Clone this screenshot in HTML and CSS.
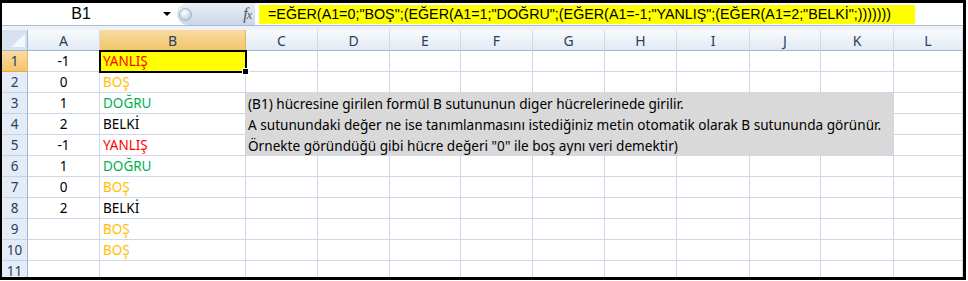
FILE: index.html
```html
<!DOCTYPE html>
<html lang="tr">
<head>
    <meta charset="UTF-8">
    <title>EĞER formülü</title>
    <link rel="stylesheet" href="styles.css">
</head>
<body>
    <div class="window">
        <!-- Formula bar -->
        <div class="formula-bar">
            <div class="name-box">
                <span class="name">B1</span>
                <span class="drop"></span>
            </div>
            <div class="fx-pill">
                <span class="knob"></span>
                <span class="fx">f<span class="fx-x">x</span></span>
            </div>
            <div class="formula">=EĞER(A1=0;"BOŞ";(EĞER(A1=1;"DOĞRU";(EĞER(A1=-1;"YANLIŞ";(EĞER(A1=2;"BELKİ";)))))))</div>
        </div>
        <div class="bar-gap"></div>

        <!-- Sheet -->
        <div class="sheet">
            <div class="corner">
                <svg viewBox="0 0 26 20" width="26" height="20">
                    <polygon points="23,4 23,17 9,17" class="corner-tri"></polygon>
                </svg>
            </div>
            <div class="col-head">A</div>
            <div class="col-head active">B</div>
            <div class="col-head">C</div>
            <div class="col-head">D</div>
            <div class="col-head">E</div>
            <div class="col-head">F</div>
            <div class="col-head">G</div>
            <div class="col-head">H</div>
            <div class="col-head">I</div>
            <div class="col-head">J</div>
            <div class="col-head">K</div>
            <div class="col-head">L</div>

            <!-- row 1 -->
            <div class="row-head active">1</div>
            <div class="cell num">-1</div>
            <div class="cell selected red">YANLIŞ<span class="handle"></span></div>
            <div class="cell"></div><div class="cell"></div><div class="cell"></div><div class="cell"></div><div class="cell"></div>
            <div class="cell"></div><div class="cell"></div><div class="cell"></div><div class="cell"></div><div class="cell"></div>

            <!-- row 2 -->
            <div class="row-head">2</div>
            <div class="cell num">0</div>
            <div class="cell orange">BOŞ</div>
            <div class="cell"></div><div class="cell"></div><div class="cell"></div><div class="cell"></div><div class="cell"></div>
            <div class="cell"></div><div class="cell"></div><div class="cell"></div><div class="cell"></div><div class="cell"></div>

            <!-- row 3 -->
            <div class="row-head">3</div>
            <div class="cell num">1</div>
            <div class="cell green">DOĞRU</div>
            <div class="note">
                <p>(B1) hücresine girilen formül B sutununun diger hücrelerinede girilir.</p>
                <p>A sutunundaki değer ne ise tanımlanmasını istediğiniz metin otomatik olarak B sutununda görünür.</p>
                <p>Örnekte göründüğü gibi hücre değeri "0" ile boş aynı veri demektir)</p>
            </div>
            <div class="cell"></div>

            <!-- row 4 -->
            <div class="row-head">4</div>
            <div class="cell num">2</div>
            <div class="cell">BELKİ</div>
            <div class="cell"></div>

            <!-- row 5 -->
            <div class="row-head">5</div>
            <div class="cell num">-1</div>
            <div class="cell red">YANLIŞ</div>
            <div class="cell"></div>

            <!-- row 6 -->
            <div class="row-head">6</div>
            <div class="cell num">1</div>
            <div class="cell green">DOĞRU</div>
            <div class="cell"></div><div class="cell"></div><div class="cell"></div><div class="cell"></div><div class="cell"></div>
            <div class="cell"></div><div class="cell"></div><div class="cell"></div><div class="cell"></div><div class="cell"></div>

            <!-- row 7 -->
            <div class="row-head">7</div>
            <div class="cell num">0</div>
            <div class="cell orange">BOŞ</div>
            <div class="cell"></div><div class="cell"></div><div class="cell"></div><div class="cell"></div><div class="cell"></div>
            <div class="cell"></div><div class="cell"></div><div class="cell"></div><div class="cell"></div><div class="cell"></div>

            <!-- row 8 -->
            <div class="row-head">8</div>
            <div class="cell num">2</div>
            <div class="cell">BELKİ</div>
            <div class="cell"></div><div class="cell"></div><div class="cell"></div><div class="cell"></div><div class="cell"></div>
            <div class="cell"></div><div class="cell"></div><div class="cell"></div><div class="cell"></div><div class="cell"></div>

            <!-- row 9 -->
            <div class="row-head">9</div>
            <div class="cell num"></div>
            <div class="cell orange">BOŞ</div>
            <div class="cell"></div><div class="cell"></div><div class="cell"></div><div class="cell"></div><div class="cell"></div>
            <div class="cell"></div><div class="cell"></div><div class="cell"></div><div class="cell"></div><div class="cell"></div>

            <!-- row 10 -->
            <div class="row-head">10</div>
            <div class="cell num"></div>
            <div class="cell orange">BOŞ</div>
            <div class="cell"></div><div class="cell"></div><div class="cell"></div><div class="cell"></div><div class="cell"></div>
            <div class="cell"></div><div class="cell"></div><div class="cell"></div><div class="cell"></div><div class="cell"></div>

            <!-- row 11 -->
            <div class="row-head">11</div>
            <div class="cell num"></div>
            <div class="cell"></div>
            <div class="cell"></div><div class="cell"></div><div class="cell"></div><div class="cell"></div><div class="cell"></div>
            <div class="cell"></div><div class="cell"></div><div class="cell"></div><div class="cell"></div><div class="cell"></div>
        </div>
    </div>
</body>
</html>
```

FILE: styles.css
```css
/* styles.css */
body {
    margin: 0;
    background: #fff;
    font-family: 'Noto Sans', sans-serif;
}

.window {
    width: 961px;
    height: 274px;
    border-style: solid;
    border-color: #000;
    border-width: 3px 3px 3px 2px;
    overflow: hidden;
    background: #fff;
}

/* ---------- formula bar ---------- */
.formula-bar {
    display: flex;
    align-items: center;
    height: 22px;
    border-bottom: 1px solid #a7bcd6;
    background: #fff;
}

.name-box {
    width: 172px;
    display: flex;
    align-items: center;
}

.name {
    width: 158px;
    text-align: center;
    font-family: 'Liberation Sans', Arial, sans-serif;
    font-size: 16px;
    color: #000;
}

.drop {
    width: 0;
    height: 0;
    margin-left: 3px;
    border-left: 4px solid transparent;
    border-right: 4px solid transparent;
    border-top: 4px solid #000;
}

.fx-pill {
    width: 78px;
    height: 22px;
    margin-left: 3px;
    border-radius: 11px 0 0 11px;
    background: linear-gradient(#e9eff8, #c9d6e8);
    display: flex;
    align-items: center;
    justify-content: space-between;
    padding: 0 4px 0 2px;
    box-sizing: border-box;
}

.knob {
    width: 11px;
    height: 11px;
    border-radius: 50%;
    background: radial-gradient(circle at 40% 35%, #ffffff, #aebdd1);
    border: 1px solid #9fb0c6;
}

.fx {
    font-family: 'Liberation Serif', serif;
    font-style: italic;
    font-size: 16px;
    color: #555;
    letter-spacing: -1px;
}

.fx-x {
    font-size: 12px;
}

.formula {
    margin-left: 4px;
    width: 656px;
    height: 19px;
    background: #ffff00;
    font-family: 'Liberation Sans', Arial, sans-serif;
    font-size: 14.3px;
    line-height: 19px;
    padding-left: 9px;
    box-sizing: border-box;
    white-space: nowrap;
    color: #000;
}

.bar-gap {
    height: 4px;
    background: #eef2f8;
}

/* ---------- sheet ---------- */
.sheet {
    display: grid;
    grid-template-columns: 26px 72px 146px 72px 72px 71px 72px 72px 72px 73px 71px 73px 1fr;
    grid-auto-rows: 21px;
    font-size: 13.5px;
}

.sheet > div {
    box-sizing: border-box;
}

.corner {
    background: #d6e2f2;
    border-right: 1px solid #9eb6ce;
    border-bottom: 1px solid #9eb6ce;
}

.corner svg {
    display: block;
}

.corner-tri {
    fill: #f4f7fb;
}

.col-head {
    background: linear-gradient(#f8fafd, #e3eaf4);
    border-right: 1px solid #d2dbe7;
    border-bottom: 1px solid #9eb6ce;
    text-align: center;
    line-height: 21px;
    color: #27415f;
    font-size: 14px;
}

.row-head {
    background: #e4ecf7;
    border-right: 1px solid #9eb6ce;
    border-bottom: 1px solid #c5d3e4;
    text-align: center;
    line-height: 21px;
    color: #27415f;
    font-size: 13.5px;
}

.col-head.active,
.row-head.active {
    background: linear-gradient(#f9dba3, #f1c56a);
    border-right-color: #e9b45c;
    border-bottom-color: #e9a93f;
}

.cell {
    border-right: 1px solid #d0d7e5;
    border-bottom: 1px solid #d0d7e5;
    line-height: 21px;
    padding-left: 3px;
    color: #000;
    white-space: nowrap;
}

.cell.num {
    text-align: center;
    padding-left: 0;
}

.cell.selected {
    position: relative;
    background: #ffff00;
    outline: 2px solid #000;
    outline-offset: -1px;
    z-index: 1;
}

.handle {
    position: absolute;
    right: -4px;
    bottom: -4px;
    width: 5px;
    height: 5px;
    background: #000;
    border: 1px solid #fff;
}

.red { color: #ff0000; }
.orange { color: #ffc000; }
.green { color: #00b050; }

.note {
    grid-column: 4 / 13;
    grid-row: 4 / 7;
    background: #d9d9d9;
    border-right: 1px solid #d0d7e5;
    border-bottom: 1px solid #d0d7e5;
    padding-left: 2px;
    font-size: 13.6px;
}

.note p {
    margin: 0;
    height: 21px;
    line-height: 21px;
    white-space: nowrap;
    color: #000;
}
```
